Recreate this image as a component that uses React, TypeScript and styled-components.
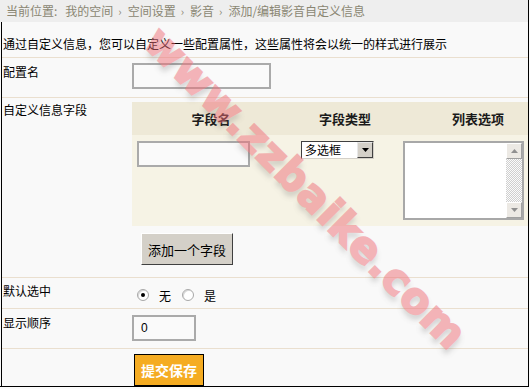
import React from "react";
import styled, { createGlobalStyle } from "styled-components";

const Global = createGlobalStyle`
  html, body { margin: 0; padding: 0; background: #fbfbfb; }
  body { font-family: "Noto Sans CJK SC", "Liberation Sans", sans-serif; font-size: 12px; color: #000; }
`;

const Frame = styled.div`
  position: relative;
  width: 528px;
  height: 386px;
  border-right: 1px solid #000;
  border-bottom: 1px solid #000;
  background: #f9f9f9;
  overflow: hidden;
`;

const Crumb = styled.div`
  height: 22px;
  line-height: 22px;
  padding-left: 6px;
  background: #eeeeee;
  color: #8a8672;
  font-size: 12px;
  white-space: nowrap;
`;

const Lead = styled.span`
  margin-right: 8px;
`;

const Sep = styled.span`
  margin: 0 6px 0 5px;
  font-size: 11px;
`;

const Body = styled.div`
  margin-left: 1px;
  border-left: 1px solid #000;
  height: 364px;
`;

const Intro = styled.div`
  height: 36px;
  line-height: 18px;
  padding-top: 13px;
  padding-left: 1px;
  box-sizing: border-box;
  border-bottom: 1px solid #eadfcf;
  white-space: nowrap;
`;

const Row = styled.div<{ $h: number; $last?: boolean }>`
  display: grid;
  grid-template-columns: 130px 1fr;
  height: ${(p) => p.$h}px;
  border-bottom: ${(p) => (p.$last ? "none" : "1px solid #eadfcf")};
  box-sizing: border-box;
`;

const Label = styled.div<{ $top: number }>`
  padding-left: 1px;
  padding-top: ${(p) => p.$top}px;
  line-height: 18px;
  white-space: nowrap;
`;

const Cell = styled.div<{ $top: number }>`
  padding-top: ${(p) => p.$top}px;
`;

const TextInput = styled.input<{ $w: number }>`
  display: block;
  width: ${(p) => p.$w}px;
  height: 26px;
  box-sizing: border-box;
  border: 2px solid #aaaaaa;
  background: #fafafa;
  font-family: "Liberation Sans", sans-serif;
  font-size: 12px;
  padding: 0 7px;
  outline: none;
`;

const Fields = styled.div`
  margin-top: 4px;
  display: flex;
  flex-direction: column;
  width: 424px;
`;

const FieldHead = styled.div`
  display: grid;
  grid-template-columns: 158px 110px 156px;
  height: 33px;
  background: #eee9d7;
  align-items: center;
  font-weight: bold;
  font-size: 13px;
  color: #1a1a1a;
  text-align: center;
`;

const FieldBody = styled.div`
  display: grid;
  grid-template-columns: 164px 102px 1fr;
  height: 91px;
  background: #f6f3e5;
  padding-top: 6px;
  padding-left: 5px;
  box-sizing: border-box;
  align-items: start;
`;

const Select = styled.div`
  display: flex;
  width: 73px;
  height: 18px;
  box-sizing: border-box;
  border: 1px solid;
  border-color: #404040 #d4d0c8 #d4d0c8 #404040;
  background: #fff;
  font-size: 12px;
  line-height: 16px;
  padding-left: 3px;
`;

const SelectText = styled.span`
  flex: 1;
`;

const SelectBtn = styled.span`
  width: 16px;
  height: 16px;
  box-sizing: border-box;
  background: #d4d0c8;
  border: 1px solid;
  border-color: #e8e8e8 #404040 #404040 #e8e8e8;
  display: flex;
  align-items: center;
  justify-content: center;
`;

const ListBox = styled.div`
  display: flex;
  width: 121px;
  height: 79px;
  box-sizing: border-box;
  border: 2px solid #a8a8a8;
  background: #fff;
`;

const ListArea = styled.div`
  flex: 1;
`;

const ScrollBar = styled.div`
  width: 16px;
  display: flex;
  flex-direction: column;
  justify-content: space-between;
  background-color: #e8e8e8;
  background-image: repeating-conic-gradient(#fbfbfb 0 25%, #cfcfcf 0 50%);
  background-size: 2px 2px;
`;

const ScrollBtn = styled.div`
  height: 16px;
  box-sizing: border-box;
  background: #ece9e4;
  border: 1px solid;
  border-color: #fff #a0a0a0 #a0a0a0 #fff;
  display: flex;
  align-items: center;
  justify-content: center;
`;

const AddBtn = styled.button`
  display: block;
  margin: 7px 0 0 9px;
  width: 92px;
  height: 32px;
  background: #d4d0c8;
  border: 1px solid;
  border-color: #fff #404040 #404040 #fff;
  font-family: "Noto Sans CJK SC", sans-serif;
  font-size: 13px;
  color: #000;
  padding: 0;
`;

const Radios = styled.div`
  display: flex;
  align-items: center;
  height: 18px;
  margin-top: 8px;
  padding-left: 5px;
  font-size: 12px;
`;

const RadioDot = styled.span<{ $on?: boolean }>`
  width: 12px;
  height: 12px;
  border-radius: 50%;
  border: 1px solid #a8a8a8;
  background: #fff;
  box-shadow: inset 1px 1px 0 #d8d8d8;
  box-sizing: border-box;
  display: inline-flex;
  align-items: center;
  justify-content: center;
  margin-right: 10px;
  &::after {
    content: "";
    width: 4px;
    height: 4px;
    border-radius: 50%;
    background: ${(p) => (p.$on ? "#000" : "transparent")};
  }
`;

const RadioLabel = styled.span`
  margin-right: 11px;
`;

const Submit = styled.button`
  display: block;
  margin: 5px 0 0 2px;
  width: 70px;
  height: 32px;
  background: #f5ac22;
  border: 1px solid #000;
  color: #fff;
  font-weight: bold;
  font-size: 14px;
  font-family: "Noto Sans CJK SC", sans-serif;
  padding: 0;
`;

const Watermark = styled.div`
  position: absolute;
  left: 170px;
  top: 16px;
  transform: rotate(45deg);
  transform-origin: 0 0;
  font-family: "DejaVu Sans", "Liberation Sans", sans-serif;
  font-weight: bold;
  font-size: 42px;
  letter-spacing: 1px;
  line-height: 52px;
  color: #ee6f78;
  -webkit-text-stroke: 2px #ee6f78;
  opacity: 0.5;
  text-shadow: 4px 4px 5px rgba(90, 90, 90, 0.45);
  white-space: nowrap;
  pointer-events: none;
`;

const Arrow = ({ up, color = "#000" }: { up?: boolean; color?: string }) => (
  <svg width="7" height="4" viewBox="0 0 7 4">
    <path d={up ? "M3.5 0 L7 4 L0 4 Z" : "M0 0 L7 0 L3.5 4 Z"} fill={color} />
  </svg>
);

export default function App() {
  return (
    <>
      <Global />
      <Frame>
        <Crumb>
          <Lead>当前位置:</Lead>我的空间<Sep>›</Sep>空间设置<Sep>›</Sep>影音<Sep>›</Sep>添加/编辑影音自定义信息
        </Crumb>
        <Body>
          <Intro>通过自定义信息，您可以自定义一些配置属性，这些属性将会以统一的样式进行展示</Intro>
          <Row $h={40}>
            <Label $top={5}>配置名</Label>
            <Cell $top={5}>
              <TextInput $w={139} />
            </Cell>
          </Row>
          <Row $h={180}>
            <Label $top={3}>自定义信息字段</Label>
            <Fields>
              <FieldHead>
                <span>字段名</span>
                <span>字段类型</span>
                <span>列表选项</span>
              </FieldHead>
              <FieldBody>
                <TextInput $w={113} />
                <Select>
                  <SelectText>多选框</SelectText>
                  <SelectBtn>
                    <Arrow />
                  </SelectBtn>
                </Select>
                <ListBox>
                  <ListArea />
                  <ScrollBar>
                    <ScrollBtn>
                      <Arrow up color="#909090" />
                    </ScrollBtn>
                    <ScrollBtn>
                      <Arrow color="#909090" />
                    </ScrollBtn>
                  </ScrollBar>
                </ListBox>
              </FieldBody>
              <AddBtn>添加一个字段</AddBtn>
            </Fields>
          </Row>
          <Row $h={31}>
            <Label $top={4}>默认选中</Label>
            <Radios>
              <RadioDot $on />
              <RadioLabel>无</RadioLabel>
              <RadioDot />
              <RadioLabel>是</RadioLabel>
            </Radios>
          </Row>
          <Row $h={40}>
            <Label $top={5}>显示顺序</Label>
            <Cell $top={6}>
              <TextInput $w={64} defaultValue="0" />
            </Cell>
          </Row>
          <Row $h={38} $last>
            <div />
            <div>
              <Submit>提交保存</Submit>
            </div>
          </Row>
        </Body>
        <Watermark>www.zzbaike.com</Watermark>
      </Frame>
    </>
  );
}
